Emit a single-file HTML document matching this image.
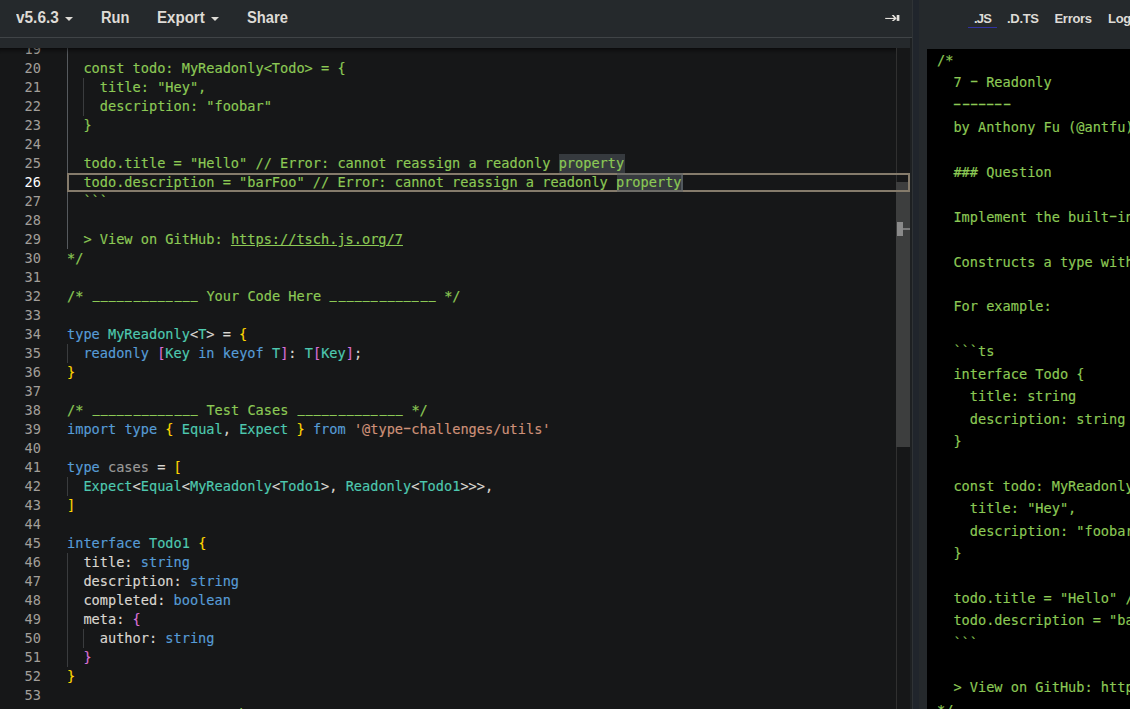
<!DOCTYPE html>
<html lang="en">
<head>
<meta charset="utf-8">
<title>TS Playground</title>
<style>
html,body{margin:0;padding:0;}
body{width:1130px;height:709px;overflow:hidden;position:relative;background:#25292c;font-family:"Liberation Sans", sans-serif;color:#e8e6e3;}
#toolbar{position:absolute;left:0;top:0;width:912px;height:37px;background:#25292c;border-bottom:1px solid #404447;}
#toolbar .item{position:absolute;top:8.2px;height:20px;line-height:20px;font-size:16px;transform-origin:0 50%;font-weight:bold;color:#dedbd6;white-space:nowrap;}
.caret{position:absolute;width:0;height:0;border-left:4px solid transparent;border-right:4px solid transparent;border-top:4px solid #dedbd6;}
#edwrap{position:absolute;left:0;top:38px;width:912px;height:671px;background:#25292c;}
#edgap{position:absolute;left:910px;top:38px;width:2px;height:671px;background:#1d2022;}
#editor{position:absolute;left:0;top:48px;width:910px;height:661px;background:#161718;overflow:hidden;font-family:"DejaVu Sans Mono", "Liberation Mono", monospace;font-size:13.62px;}
.ln{position:absolute;left:0;width:41px;height:19px;line-height:19px;text-align:right;color:#a29f9a;}
.ln.act{color:#fff;}
.cl{position:absolute;z-index:2;left:67px;height:19px;line-height:19px;white-space:pre;color:#d9d6d0;-webkit-text-stroke:0.15px;}
.c{color:#8cc955;} .k{color:#569cd6;} .t{color:#4ec9b0;} .s{color:#ce9178;}
.b1{color:#ffd700;} .b2{color:#da70d6;} .f{color:#9a9a98;}
.hl{position:absolute;z-index:1;height:19px;background:rgba(85,93,100,.5);}
.u{text-decoration:underline;}
.hy{display:inline-block;font-style:normal;transform:translateY(-1.6px) scale(1.8,1.15);}
.us{display:inline-block;font-style:normal;transform:translateY(-3.4px) scale(.82,1);-webkit-text-stroke:0.5px;}
.ig{position:absolute;width:1px;background:#3a3c3e;}
#curline{position:absolute;z-index:1;left:67px;top:125px;width:839px;height:15px;border:2px solid #857b6b;}
#vscroll{position:absolute;left:896px;top:0;width:14px;height:661px;border-left:1px solid #303030;box-sizing:border-box;}
#slider{position:absolute;left:896px;top:134px;width:14px;height:265px;background:#3d3e3e;}
#shadow{position:absolute;left:0;top:0;width:896px;height:6px;box-shadow:inset 0 6px 6px -6px #000;}
#drag{position:absolute;z-index:3;left:912px;top:0;width:6.6px;height:709px;background:#20252c;border-left:1px solid #2f3336;box-sizing:border-box;}
#side{position:absolute;left:918px;top:0;width:212px;height:709px;background:#25292c;overflow:hidden;}
#side .tab{position:absolute;top:9px;height:20px;line-height:20px;font-size:13px;letter-spacing:-0.3px;font-weight:bold;color:#dedbd6;white-space:nowrap;}
#sidecode{position:absolute;left:9px;top:49px;width:203px;height:660px;background:#000;overflow:hidden;}
#sidecode pre{margin:0;position:absolute;left:10px;top:0px;font-family:"DejaVu Sans Mono", "Liberation Mono", monospace;font-size:13.62px;line-height:22.4px;color:#8cc955;white-space:pre;-webkit-text-stroke:0.15px;}
</style>
</head>
<body>
<div id="toolbar">
<div class="item" style="left:15.7px;transform:scaleX(.962)">v5.6.3</div><div class="caret" style="left:65px;top:17px"></div>
<div class="item" style="left:100.5px;transform:scaleX(.915)">Run</div>
<div class="item" style="left:157px;transform:scaleX(.942)">Export</div><div class="caret" style="left:211px;top:17px"></div>
<div class="item" style="left:247px;transform:scaleX(.922)">Share</div>
<svg style="position:absolute;left:884px;top:12px" width="18" height="12" viewBox="0 0 18 12"><path d="M1.2 6.45H11" stroke="#e4e1dc" stroke-width="1.1" fill="none"/><path d="M7.7 3H9.8L12.7 6.45L9.8 8.9H7.7L10.5 6.45Z" fill="#e4e1dc"/><rect x="12.7" y="3" width="2.7" height="5.9" fill="#e4e1dc"/></svg>
</div>
<div id="edwrap"></div>
<div id="edgap"></div>
<div id="editor">

<div class="ln" style="top:-8px">19</div><div class="cl" style="top:-8px"></div>
<div class="ln" style="top:11px">20</div><div class="cl" style="top:11px"><span class="c">  const todo: MyReadonly&lt;Todo&gt; = {</span></div>
<div class="ln" style="top:30px">21</div><div class="cl" style="top:30px"><span class="c">    title: "Hey",</span></div>
<div class="ln" style="top:49px">22</div><div class="cl" style="top:49px"><span class="c">    description: "foobar"</span></div>
<div class="ln" style="top:68px">23</div><div class="cl" style="top:68px"><span class="c">  }</span></div>
<div class="ln" style="top:87px">24</div><div class="cl" style="top:87px"></div>
<div class="ln" style="top:106px">25</div><div class="cl" style="top:106px"><span class="c">  todo.title = "Hello" // Error: cannot reassign a readonly </span><span class="c">property</span></div>
<div class="ln act" style="top:125px">26</div><div class="cl" style="top:125px"><span class="c">  todo.description = "barFoo" // Error: cannot reassign a readonly </span><span class="c">property</span></div>
<div class="ln" style="top:144px">27</div><div class="cl" style="top:144px"><span class="c">  ```</span></div>
<div class="ln" style="top:163px">28</div><div class="cl" style="top:163px"></div>
<div class="ln" style="top:182px">29</div><div class="cl" style="top:182px"><span class="c">  &gt; View on GitHub: </span><span class="c u">https://tsch.js.org/7</span></div>
<div class="ln" style="top:201px">30</div><div class="cl" style="top:201px"><span class="c">*/</span></div>
<div class="ln" style="top:220px">31</div><div class="cl" style="top:220px"></div>
<div class="ln" style="top:239px">32</div><div class="cl" style="top:239px"><span class="c">/* </span><span class="c"><i class="us">_</i><i class="us">_</i><i class="us">_</i><i class="us">_</i><i class="us">_</i><i class="us">_</i><i class="us">_</i><i class="us">_</i><i class="us">_</i><i class="us">_</i><i class="us">_</i><i class="us">_</i><i class="us">_</i></span><span class="c"> Your Code Here </span><span class="c"><i class="us">_</i><i class="us">_</i><i class="us">_</i><i class="us">_</i><i class="us">_</i><i class="us">_</i><i class="us">_</i><i class="us">_</i><i class="us">_</i><i class="us">_</i><i class="us">_</i><i class="us">_</i><i class="us">_</i></span><span class="c"> */</span></div>
<div class="ln" style="top:258px">33</div><div class="cl" style="top:258px"></div>
<div class="ln" style="top:277px">34</div><div class="cl" style="top:277px"><span class="k">type</span> <span class="t">MyReadonly</span>&lt;<span class="t">T</span>&gt; = <span class="b1">{</span></div>
<div class="ln" style="top:296px">35</div><div class="cl" style="top:296px">  <span class="k">readonly</span> <span class="b2">[</span><span class="t">Key</span> <span class="k">in</span> <span class="k">keyof</span> <span class="t">T</span><span class="b2">]</span>: <span class="t">T</span><span class="b2">[</span><span class="t">Key</span><span class="b2">]</span>;</div>
<div class="ln" style="top:315px">36</div><div class="cl" style="top:315px"><span class="b1">}</span></div>
<div class="ln" style="top:334px">37</div><div class="cl" style="top:334px"></div>
<div class="ln" style="top:353px">38</div><div class="cl" style="top:353px"><span class="c">/* </span><span class="c"><i class="us">_</i><i class="us">_</i><i class="us">_</i><i class="us">_</i><i class="us">_</i><i class="us">_</i><i class="us">_</i><i class="us">_</i><i class="us">_</i><i class="us">_</i><i class="us">_</i><i class="us">_</i><i class="us">_</i></span><span class="c"> Test Cases </span><span class="c"><i class="us">_</i><i class="us">_</i><i class="us">_</i><i class="us">_</i><i class="us">_</i><i class="us">_</i><i class="us">_</i><i class="us">_</i><i class="us">_</i><i class="us">_</i><i class="us">_</i><i class="us">_</i><i class="us">_</i></span><span class="c"> */</span></div>
<div class="ln" style="top:372px">39</div><div class="cl" style="top:372px"><span class="k">import</span> <span class="k">type</span> <span class="b1">{</span> <span class="t">Equal</span>, <span class="t">Expect</span> <span class="b1">}</span> <span class="k">from</span> <span class="s">'@type<i class="hy">-</i>challenges/utils'</span></div>
<div class="ln" style="top:391px">40</div><div class="cl" style="top:391px"></div>
<div class="ln" style="top:410px">41</div><div class="cl" style="top:410px"><span class="k">type</span> <span class="t f">cases</span> = <span class="b1">[</span></div>
<div class="ln" style="top:429px">42</div><div class="cl" style="top:429px">  <span class="t">Expect</span>&lt;<span class="t">Equal</span>&lt;<span class="t">MyReadonly</span>&lt;<span class="t">Todo1</span>&gt;, <span class="t">Readonly</span>&lt;<span class="t">Todo1</span>&gt;&gt;&gt;,</div>
<div class="ln" style="top:448px">43</div><div class="cl" style="top:448px"><span class="b1">]</span></div>
<div class="ln" style="top:467px">44</div><div class="cl" style="top:467px"></div>
<div class="ln" style="top:486px">45</div><div class="cl" style="top:486px"><span class="k">interface</span> <span class="t">Todo1</span> <span class="b1">{</span></div>
<div class="ln" style="top:505px">46</div><div class="cl" style="top:505px">  title: <span class="k">string</span></div>
<div class="ln" style="top:524px">47</div><div class="cl" style="top:524px">  description: <span class="k">string</span></div>
<div class="ln" style="top:543px">48</div><div class="cl" style="top:543px">  completed: <span class="k">boolean</span></div>
<div class="ln" style="top:562px">49</div><div class="cl" style="top:562px">  meta: <span class="b2">{</span></div>
<div class="ln" style="top:581px">50</div><div class="cl" style="top:581px">    author: <span class="k">string</span></div>
<div class="ln" style="top:600px">51</div><div class="cl" style="top:600px">  <span class="b2">}</span></div>
<div class="ln" style="top:619px">52</div><div class="cl" style="top:619px"><span class="b1">}</span></div>
<div class="ln" style="top:638px">53</div><div class="cl" style="top:638px"></div>
<div class="ln" style="top:657px">54</div><div class="cl" style="top:657px"><span class="c">/* </span><span class="c"><i class="us">_</i><i class="us">_</i><i class="us">_</i><i class="us">_</i><i class="us">_</i><i class="us">_</i><i class="us">_</i><i class="us">_</i><i class="us">_</i><i class="us">_</i><i class="us">_</i><i class="us">_</i><i class="us">_</i></span><span class="c"> Further Steps </span><span class="c"><i class="us">_</i><i class="us">_</i><i class="us">_</i><i class="us">_</i><i class="us">_</i><i class="us">_</i><i class="us">_</i><i class="us">_</i><i class="us">_</i><i class="us">_</i><i class="us">_</i><i class="us">_</i><i class="us">_</i></span><span class="c"> */</span></div>
<div id="curline"></div>
<div class="hl" style="left:559px;top:106px;width:66px"></div>
<div class="hl" style="left:617px;top:125px;width:66px"></div>
<div style="position:absolute;left:681px;top:125px;width:2px;height:19px;background:#4c5257"></div>
<div class="ig" style="left:67px;top:-8px;height:209px;background:#565a5e;"></div>
<div class="ig" style="left:83px;top:30px;height:38px;"></div>
<div class="ig" style="left:67px;top:296px;height:19px;"></div>
<div class="ig" style="left:67px;top:429px;height:19px;"></div>
<div class="ig" style="left:67px;top:505px;height:114px;"></div>
<div class="ig" style="left:83px;top:581px;height:19px;"></div>
<div id="vscroll"></div><div id="slider"></div><div id="shadow"></div>
<div style="position:absolute;left:897px;top:174px;width:6px;height:14px;background:#8a8a8a"></div><div style="position:absolute;left:903px;top:180px;width:7px;height:2px;background:#7a7a7a"></div>
</div>
<div id="drag"></div>
<div id="side">
<div class="tab" style="left:56px;letter-spacing:-0.8px">.JS</div><div style="position:absolute;left:50px;top:27px;width:29px;height:1px;background:#3232a0"></div>
<div class="tab" style="left:89px">.D.TS</div>
<div class="tab" style="left:136.5px">Errors</div>
<div class="tab" style="left:190px">Logs</div>
<div id="sidecode"><pre>/*
  7 <i class="hy">-</i> Readonly
  <i class="hy">-</i><i class="hy">-</i><i class="hy">-</i><i class="hy">-</i><i class="hy">-</i><i class="hy">-</i><i class="hy">-</i>
  by Anthony Fu (@antfu) #easy #built<i class="hy">-</i>in #readonly #object<i class="hy">-</i>keys

  ### Question

  Implement the built<i class="hy">-</i>in `Readonly&lt;T&gt;` generic without using it.

  Constructs a type with all properties of T set to readonly, meaning the properties of the constructed type cannot be reassigned.

  For example:

  ```ts
  interface Todo {
    title: string
    description: string
  }

  const todo: MyReadonly&lt;Todo&gt; = {
    title: "Hey",
    description: "foobar"
  }

  todo.title = "Hello" // Error: cannot reassign a readonly property
  todo.description = "barFoo" // Error: cannot reassign a readonly property
  ```

  &gt; View on GitHub: https://tsch.js.org/7
*/
export {};</pre></div>
</div>
</body>
</html>
